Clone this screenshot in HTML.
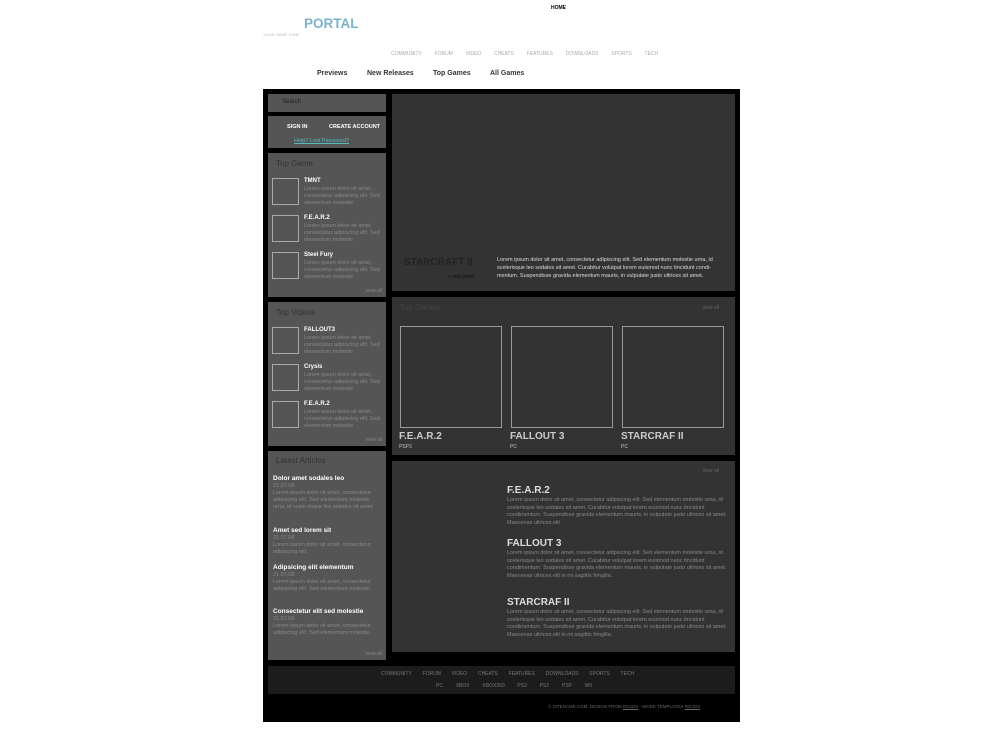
<!DOCTYPE html>
<html><head><meta charset="utf-8"><style>
*{margin:0;padding:0;box-sizing:border-box}
body{width:1002px;height:738px;background:#fff;font-family:"Liberation Sans",sans-serif;position:relative;overflow:hidden}
.a{position:absolute}
.lp{position:absolute;left:268px;width:118px;background:#555;}
.rp{position:absolute;left:392px;width:343px;background:#333;}
.h{color:#333;font-size:8px;}
.it{position:absolute;left:4px}
.th{position:absolute;left:0;top:0;width:27px;height:27px;border:1px solid #aaa}
.tt{position:absolute;left:32px;top:0px;font-size:6px;font-weight:bold;color:#fff;width:82px}
.tx{position:absolute;left:32px;top:8px;font-size:5.5px;line-height:7px;color:#888;width:80px}
.va{position:absolute;right:4px;bottom:3px;font-size:5px;color:#888}
.box{position:absolute;top:29px;width:102px;height:102px;border:1px solid #999}
.gt{position:absolute;top:134px;font-size:10px;font-weight:bold;color:#ccc}
.gs{position:absolute;top:147px;font-size:5px;color:#999;font-weight:bold}
.ah{position:absolute;left:115px;font-size:10px;font-weight:bold;color:#ddd}
.at{position:absolute;left:115px;width:222px;font-size:5.5px;line-height:7.5px;color:#888}
.lt{position:absolute;left:5px;font-size:6.5px;font-weight:bold;color:#fff}
.ld{position:absolute;left:5px;font-size:5.5px;color:#888;width:110px;line-height:7px}
</style></head><body>
<div class="a" style="left:551px;top:5px;font-size:5px;font-weight:bold">HOME</div>
<div class="a" style="left:304px;top:16px;font-size:13.5px;font-weight:bold;color:#7ab3cc">PORTAL</div>
<div class="a" style="left:263px;top:32px;font-size:4px;color:#bbb">YOUR GAME ZONE</div>
<div class="a" style="left:391px;top:51px;font-size:5px;color:#aaa;word-spacing:5px">COMMUNITY &nbsp;FORUM &nbsp;VIDEO &nbsp;CHEATS &nbsp;FEATURES &nbsp;DOWNLOADS &nbsp;SPORTS &nbsp;TECH</div>
<div class="a" style="left:317px;top:70px;font-size:7px;font-weight:bold;color:#333">Previews</div>
<div class="a" style="left:367px;top:70px;font-size:7px;font-weight:bold;color:#333">New Releases</div>
<div class="a" style="left:433px;top:70px;font-size:7px;font-weight:bold;color:#333">Top Games</div>
<div class="a" style="left:490px;top:70px;font-size:7px;font-weight:bold;color:#333">All Games</div>

<div class="a" style="left:263px;top:89px;width:477px;height:633px;background:#000"></div>

<div class="lp" style="top:94px;height:18px"><span class="a" style="left:14px;top:5px;font-size:6px;color:#222">Search</span></div>
<div class="lp" style="top:116px;height:32px">
<span class="a" style="left:19px;top:8px;font-size:5.5px;font-weight:bold;color:#fff">SIGN IN</span>
<span class="a" style="left:61px;top:8px;font-size:5.5px;font-weight:bold;color:#fff">CREATE ACCOUNT</span>
<span class="a" style="left:26px;top:22px;font-size:5.5px;color:#5bb;text-decoration:underline">Help? Lost Password?</span></div>

<div class="lp" style="top:153px;height:144px"><span class="a h" style="left:8px;top:6px">Top Game</span>
<div class="it" style="top:25px"><div class="th"></div><div class="tt">TMNT</div><div class="tx">Lorem ipsum dolor sit amet, consectetur adipiscing elit. Sed elementum molestie</div></div>
<div class="it" style="top:62px"><div class="th"></div><div class="tt">F.E.A.R.2</div><div class="tx">Lorem ipsum dolor sit amet, consectetur adipiscing elit. Sed elementum molestie</div></div>
<div class="it" style="top:99px"><div class="th"></div><div class="tt">Steel Fury</div><div class="tx">Lorem ipsum dolor sit amet, consectetur adipiscing elit. Sed elementum molestie</div></div>
<span class="va">view all</span></div>

<div class="lp" style="top:302px;height:144px"><span class="a h" style="left:8px;top:6px">Top Videos</span>
<div class="it" style="top:25px"><div class="th"></div><div class="tt">FALLOUT3</div><div class="tx">Lorem ipsum dolor sit amet, consectetur adipiscing elit. Sed elementum molestie</div></div>
<div class="it" style="top:62px"><div class="th"></div><div class="tt">Crysis</div><div class="tx">Lorem ipsum dolor sit amet, consectetur adipiscing elit. Sed elementum molestie</div></div>
<div class="it" style="top:99px"><div class="th"></div><div class="tt">F.E.A.R.2</div><div class="tx">Lorem ipsum dolor sit amet, consectetur adipiscing elit. Sed elementum molestie</div></div>
<span class="va">view all</span></div>

<div class="lp" style="top:451px;height:209px"><span class="a h" style="left:8px;top:5px">Latest Articles</span>
<div class="lt" style="top:24px">Dolor amet sodales leo</div>
<div class="ld" style="top:32px">21.07.08<br>Lorem ipsum dolor sit amet, consectetur adipiscing elit. Sed elementum molestie urna, id scele risque leo sodales sit amet.</div>
<div class="lt" style="top:76px">Amet sed lorem sit</div>
<div class="ld" style="top:84px">21.07.08<br>Lorem ipsum dolor sit amet, consectetur adipiscing elit.</div>
<div class="lt" style="top:113px">Adipsicing elit elementum</div>
<div class="ld" style="top:121px">21.07.08<br>Lorem ipsum dolor sit amet, consectetur adipiscing elit. Sed elementum molestie.</div>
<div class="lt" style="top:157px">Consectetur elit sed molestie</div>
<div class="ld" style="top:165px">21.07.08<br>Lorem ipsum dolor sit amet, consectetur adipiscing elit. Sed elementum molestie.</div>
<span class="va">view all</span></div>

<div class="rp" style="top:94px;height:197px">
<span class="a" style="left:12px;top:163px;font-size:10px;font-weight:bold;color:#222">STARCRAFT II</span>
<span class="a" style="left:56px;top:180px;font-size:5px;color:#111">+ add photo</span>
<div class="a" style="left:105px;top:162px;width:228px;font-size:5.5px;line-height:8px;color:#ddd">Lorem ipsum dolor sit amet, consectetur adipiscing elit. Sed elementum molestie urna, id scelerisque leo sodales sit amet. Curabitur volutpat lorem euismod nunc tincidunt condi- mentum. Suspendisse gravida elementum mauris, in vulputate justo ultrices sit amet.</div></div>

<div class="rp" style="top:297px;height:158px">
<span class="a h" style="left:8px;top:6px;color:#444">Top Games</span><span class="a" style="right:16px;top:8px;font-size:5px;color:#666">view all</span>
<div class="box" style="left:8px"></div><div class="box" style="left:119px"></div><div class="box" style="left:230px"></div>
<div class="gt" style="left:7px">F.E.A.R.2</div><div class="gs" style="left:7px">PSP3</div>
<div class="gt" style="left:118px">FALLOUT 3</div><div class="gs" style="left:118px">PC</div>
<div class="gt" style="left:229px">STARCRAF II</div><div class="gs" style="left:229px">PC</div></div>

<div class="rp" style="top:461px;height:191px">
<span class="a" style="right:16px;top:7px;font-size:5px;color:#666">view all</span>
<div class="ah" style="top:24px">F.E.A.R.2</div>
<div class="at" style="top:36px">Lorem ipsum dolor sit amet, consectetur adipiscing elit. Sed elementum molestie urna, id scelerisque leo sodales sit amet. Curabitur volutpat lorem euismod nunc tincidunt condimentum. Suspendisse gravida elementum mauris, in vulputate justo ultrices sit amet. Maecenas ultrices elit</div>
<div class="ah" style="top:77px">FALLOUT 3</div>
<div class="at" style="top:89px">Lorem ipsum dolor sit amet, consectetur adipiscing elit. Sed elementum molestie urna, id scelerisque leo sodales sit amet. Curabitur volutpat lorem euismod nunc tincidunt condimentum. Suspendisse gravida elementum mauris, in vulputate justo ultrices sit amet. Maecenas ultrices elit in mi sagittis fringilla.</div>
<div class="ah" style="top:136px">STARCRAF II</div>
<div class="at" style="top:148px">Lorem ipsum dolor sit amet, consectetur adipiscing elit. Sed elementum molestie urna, id scelerisque leo sodales sit amet. Curabitur volutpat lorem euismod nunc tincidunt condimentum. Suspendisse gravida elementum mauris, in vulputate justo ultrices sit amet. Maecenas ultrices elit in mi sagittis fringilla.</div></div>

<div class="a" style="left:268px;top:666px;width:467px;height:28px;background:#1c1c1c"></div>
<div class="a" style="left:381px;top:671px;font-size:5px;color:#777;word-spacing:4px">COMMUNITY &nbsp;FORUM &nbsp;VIDEO &nbsp;CHEATS &nbsp;FEATURES &nbsp;DOWNLOADS &nbsp;SPORTS &nbsp;TECH</div>
<div class="a" style="left:436px;top:683px;font-size:5px;color:#777;word-spacing:5px">PC &nbsp;XBOX &nbsp;XBOX360 &nbsp;PS3 &nbsp;PS2 &nbsp;PSP &nbsp;WII</div>
<div class="a" style="left:548px;top:704px;font-size:4.5px;color:#666">© SITENAME.COM. DESIGN FROM <u>ROJOS</u> - MORE TEMPLATES <u>ROJOS</u></div>
</body></html>
